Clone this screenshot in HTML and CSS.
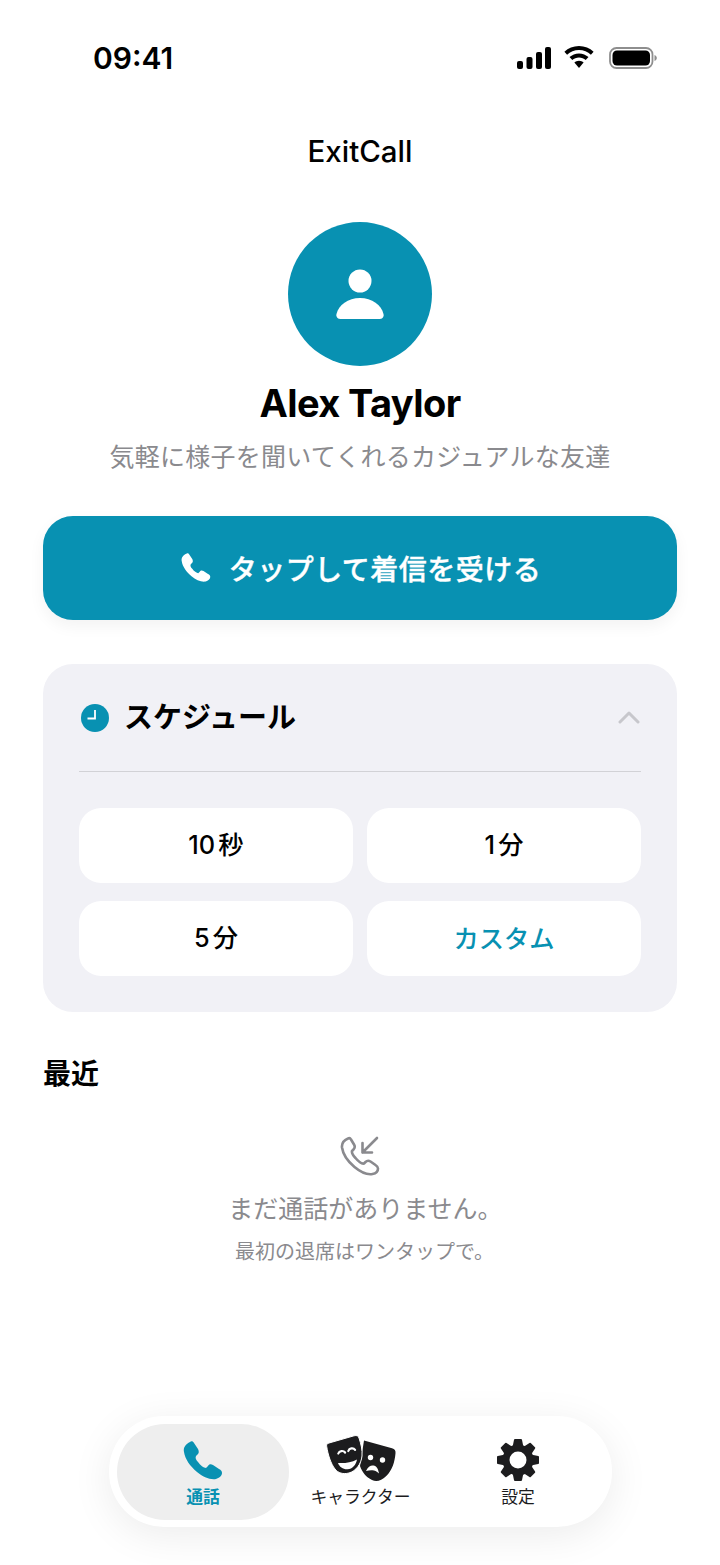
FILE: index.html
```html
<!DOCTYPE html>
<html lang="ja">
<head>
<meta charset="utf-8">
<title>ExitCall</title>
<link rel="stylesheet" href="styles.css">
</head>
<body>
<div class="screen">
  <header class="status">
    <span class="time">09:41</span>
    <div class="status-icons">
      <svg class="sig" viewBox="0 0 34 22"><rect x="0" y="14" width="6" height="8" rx="2"/><rect x="9.500" y="10" width="6" height="12" rx="2"/><rect x="19" y="5" width="6" height="17" rx="2"/><rect x="28" y="0" width="6" height="22" rx="2"/></svg>
      <svg class="wifi" viewBox="0 0 30 22"><path d="M15 0C9.300 0 4.200 2.200.4 5.800l2.700 2.900C6.200 5.700 10.400 3.900 15 3.900s8.800 1.800 11.900 4.800l2.700-2.900C25.800 2.200 20.700 0 15 0z"/><path d="M15 7.400c-3.700 0-7 1.400-9.500 3.700l2.800 2.900c1.800-1.600 4.100-2.600 6.700-2.600s4.900 1 6.700 2.600l2.800-2.900c-2.500-2.300-5.800-3.700-9.500-3.700z"/><path d="M15 14.800c-1.800 0-3.400.7-4.600 1.800L15 22l4.600-5.400c-1.200-1.100-2.800-1.800-4.600-1.800z"/></svg>
      <svg class="batt" viewBox="0 0 48 22"><rect x="1" y="1" width="42.500" height="20" rx="6.500" fill="none" stroke="#8e8e8e" stroke-width="1.800"/><rect x="3.500" y="3.500" width="37.500" height="15" rx="4.500"/><path d="M45.500 8v6c1.400-.5 2.300-1.700 2.300-3s-.9-2.500-2.300-3z" fill="#8e8e8e"/></svg>
    </div>
  </header>

  <h1 class="app-title">ExitCall</h1>

  <section class="profile">
    <div class="avatar">
      <svg viewBox="0 0 48 52" class="avatar-icon"><circle cx="24" cy="12" r="11.500"/><path d="M24 29C12 29 2.500 36 .500 45c-.600 3 1 5 4 5h39c3 0 4.600-2 4-5C45.500 36 36 29 24 29z"/></svg>
    </div>
    <h2 class="name">Alex Taylor</h2>
    <p class="persona">気軽に様子を聞いてくれるカジュアルな友達</p>
  </section>

  <button class="call-btn">
    <svg class="btn-phone" viewBox="0 0 40 40"><path d="M7 1C3 3 0 6 1 11c1 7 6 14 13 20 6 5 13 8 19 7 3-1 6-3 6-6 0-2-1-3-3-4l-6-4c-2-1-4-1-5 1l-2 2c-2 0-6-3-8-6-2-2-3-4-2-6l2-2c1-1 1-3 0-5L11 2C10 0 8 0 7 1z"/></svg>
    <span>タップして着信を受ける</span>
  </button>

  <section class="schedule">
    <div class="sched-head">
      <svg class="clock" viewBox="0 0 28 28"><circle cx="14" cy="14" r="14" fill="#0891b2"/><path d="M14 6v8.500H6.500" fill="none" stroke="#fff" stroke-width="1.800"/></svg>
      <h3 class="sched-title">スケジュール</h3>
      <svg class="chev" viewBox="0 0 22 14"><path d="M2 12l9-9 9 9" fill="none" stroke="#c7c7cc" stroke-width="3" stroke-linecap="round" stroke-linejoin="round"/></svg>
    </div>
    <div class="sched-grid">
      <div class="opt">10秒</div>
      <div class="opt">1分</div>
      <div class="opt">5分</div>
      <div class="opt opt-accent">カスタム</div>
    </div>
  </section>

  <h3 class="recent">最近</h3>
  <section class="empty">
    <svg class="empty-icon" viewBox="0 0 40 40"><path d="M8 2.500C4.500 4 1.500 7 2 11.500c1 7 6 14 12.500 19.500 6 5 12 8 18 7 3-.5 5.500-2.500 5.500-5.500 0-1.500-1-2.500-2.500-3.500l-5-3.500c-2-1.200-3.500-1-5 .5L24 27.500c-2 .5-6-2.500-8.500-5.500-2.500-2.500-4-5-3.500-7l1.500-1.500c1.500-1.500 1.700-3 .5-5L11 3.500C10.200 2 9 2 8 2.500z" fill="none" stroke="#8a8a8e" stroke-width="2.600" stroke-linejoin="round"/><path d="M37 2L22.500 16.500M22.500 7v9.500H32" fill="none" stroke="#8a8a8e" stroke-width="2.600" stroke-linecap="round" stroke-linejoin="round"/></svg>
    <p class="empty-main">まだ通話がありません。</p>
    <p class="empty-sub">最初の退席はワンタップで。</p>
  </section>

  <nav class="tabs">
    <div class="tab tab-active">
      <svg class="tab-phone" viewBox="0 0 40 40"><path d="M7 1C3 3 0 6 1 11c1 7 6 14 13 20 6 5 13 8 19 7 3-1 6-3 6-6 0-2-1-3-3-4l-6-4c-2-1-4-1-5 1l-2 2c-2 0-6-3-8-6-2-2-3-4-2-6l2-2c1-1 1-3 0-5L11 2C10 0 8 0 7 1z"/></svg>
      <span class="tab-label">通話</span>
    </div>
    <div class="tab">
      <svg class="tab-masks" viewBox="0 0 70 47">
        <path d="M38 5.500L66 13.200c2.800.800 3.800 2.400 3.500 5-.800 8.500-3 17-9.500 23-4.500 4.500-9.500 5.800-14 3.800-6-2.800-10-8-12-14z" fill="#1c1c1e"/>
        <circle cx="44.500" cy="22.500" r="2.700" fill="#fff"/><circle cx="56.500" cy="25" r="2.700" fill="#fff"/>
        <path d="M40 36c2-4.500 5-6 7.500-5.500 3 .500 4.800 3.500 5.500 8-2.500-2.500-4.500-3.200-6.500-3.200-2-.2-4 .1-6.500.7z" fill="#fff"/>
        <path d="M3 8L28 .8c3-.800 4.300.200 5 2.200 2 6 3.500 12 3 18-.800 8-6 15-13 17-6 1.500-11 0-14-4C5 29 2 20 .7 11.500 .300 9.500 1 8.500 3 8z" fill="#1c1c1e" stroke="#fff" stroke-width="1"/>
        <path d="M12.300 18.500c1-2.800 5-3.400 6.800-1M22.300 16c1-2.800 5-3.600 6.800-1.200" fill="none" stroke="#fff" stroke-width="2.200" stroke-linecap="round"/>
        <path d="M12 28c6.500.500 13-.500 19-3.500-1 5.500-4.500 9.500-9.500 9.800-4.500.200-8-2.300-9.500-6.300z" fill="#fff"/>
      </svg>
      <span class="tab-label">キャラクター</span>
    </div>
    <div class="tab">
      <svg class="tab-gear" viewBox="0 0 44 44">
        <defs><path id="tooth" d="M19 2h6l2 10H17z" stroke="#1c1c1e" stroke-width="2" stroke-linejoin="round"/></defs>
        <g fill="#1c1c1e">
          <circle cx="22" cy="22" r="15.500"/>
          <use href="#tooth"/>
          <use href="#tooth" transform="rotate(45 22 22)"/>
          <use href="#tooth" transform="rotate(90 22 22)"/>
          <use href="#tooth" transform="rotate(135 22 22)"/>
          <use href="#tooth" transform="rotate(180 22 22)"/>
          <use href="#tooth" transform="rotate(225 22 22)"/>
          <use href="#tooth" transform="rotate(270 22 22)"/>
          <use href="#tooth" transform="rotate(315 22 22)"/>
        </g>
        <circle cx="22" cy="22" r="8.500" fill="#fff"/>
      </svg>
      <span class="tab-label">設定</span>
    </div>
  </nav>
</div>
</body>
</html>
```
FILE: styles.css
```css
* { box-sizing: border-box; margin: 0; padding: 0; }
html, body { background: #fff; }
body {
  font-family: Inter, "Noto Sans CJK JP", sans-serif;
  color: #000;
  text-autospace: normal;
}
.screen {
  width: 720px;
  height: 1565px;
  display: flex;
  flex-direction: column;
  padding: 0 43px 38px;
  overflow: hidden;
}
.status {
  height: 116px;
  margin: 0 -43px;
  padding: 42px 63px 0 93px;
  display: flex;
  justify-content: space-between;
  align-items: flex-start;
}
.time { font-size: 30px; font-weight: 600; line-height: 33px; }
.status-icons { display: flex; align-items: flex-start; padding-top: 4px; }
.sig { width: 34px; height: 22px; margin-right: 13px; margin-top: 1px; }
.wifi { width: 30px; height: 22px; margin-right: 15px; }
.batt { width: 48px; height: 22px; margin-top: 1px; }
.app-title {
  font-size: 29.5px;
  font-weight: 500;
  line-height: 70px;
  text-align: center;
  height: 70px;
}
.profile { display: flex; flex-direction: column; align-items: center; padding-top: 36px; }
.avatar {
  width: 144px;
  height: 144px;
  border-radius: 50%;
  background: #0891b2;
  display: flex;
  align-items: center;
  justify-content: center;
}
.avatar-icon { width: 48px; height: 52px; fill: #fff; margin-top: 2px; }
.name { font-size: 38px; font-weight: 700; line-height: 46px; margin-top: 14px; letter-spacing: -0.6px; }
.persona { font-size: 25px; line-height: 36px; color: #8a8a8e; margin-top: 13px; letter-spacing: 0.25px; }
.call-btn {
  margin-top: 41px;
  height: 104px;
  border: 0;
  border-radius: 30px;
  background: #0891b2;
  color: #fff;
  font: 500 28px Inter, "Noto Sans CJK JP", sans-serif;
  letter-spacing: 0.5px;
  -webkit-text-stroke: 0.4px #fff;
  display: flex;
  align-items: center;
  justify-content: center;
  gap: 18px;
  padding-left: 2px;
  box-shadow: 0 6px 16px rgba(0, 0, 0, 0.05);
}
.btn-phone { width: 30px; height: 30px; fill: #fff; }
.schedule {
  margin-top: 44px;
  height: 348px;
  border-radius: 30px;
  background: #f1f1f6;
  padding: 0 36px;
}
.sched-head {
  height: 108px;
  display: flex;
  align-items: center;
  border-bottom: 1px solid #d2d2d6;
}
.clock { width: 28px; height: 28px; margin-left: 2px; }
.sched-title { font-size: 29px; font-weight: 700; margin-left: 15px; flex: 1; line-height: 40px; }
.chev { width: 22px; height: 14px; margin-right: 1px; margin-bottom: 2px; }
.sched-grid {
  display: grid;
  grid-template-columns: 1fr 1fr;
  gap: 18px 14px;
  margin-top: 36px;
}
.opt {
  height: 75px;
  border-radius: 22px;
  background: #fff;
  display: flex;
  align-items: center;
  justify-content: center;
  font-size: 25.3px;
  font-weight: 500;
  padding-bottom: 5px;
}
.opt-accent { color: #0891b2; padding-bottom: 4px; }
.recent { font-size: 28px; font-weight: 700; line-height: 40px; margin-top: 42px; }
.empty { display: flex; flex-direction: column; align-items: center; padding-top: 42px; }
.empty-icon { width: 40px; height: 40px; }
.empty-main { font-size: 25px; line-height: 36px; color: #8a8a8e; margin-top: 15px; padding-left: 11px; }
.empty-sub { font-size: 20px; line-height: 28px; color: #8a8a8e; margin-top: 11px; padding-left: 9px; }
.tabs {
  margin: auto 0 0 66px;
  width: 503px;
  align-self: flex-start;
  height: 111px;
  padding: 8px 8px 7px;
  border-radius: 55px;
  background: #fff;
  box-shadow: 0 8px 40px rgba(0, 0, 0, 0.08);
  display: grid;
  grid-template-columns: 172px 1fr 172px;
  flex: none;
}
.tab {
  display: flex;
  flex-direction: column;
  align-items: center;
  justify-content: flex-end;
  padding-bottom: 13px;
  border-radius: 48px;
}
.tab-active { background: #eeeeee; color: #0891b2; }
.tab-label { font-size: 16.8px; font-weight: 400; line-height: 20px; margin-top: 6px; color: #1c1c1e; }
.tab-active .tab-label { color: #0891b2; font-weight: 600; }
.tab-phone { width: 40px; height: 40px; fill: #0891b2; }
.tab-masks { width: 70px; height: 47px; margin-bottom: -1px; }
.tab-gear { width: 44px; height: 44px; margin-bottom: -1px; }
```
